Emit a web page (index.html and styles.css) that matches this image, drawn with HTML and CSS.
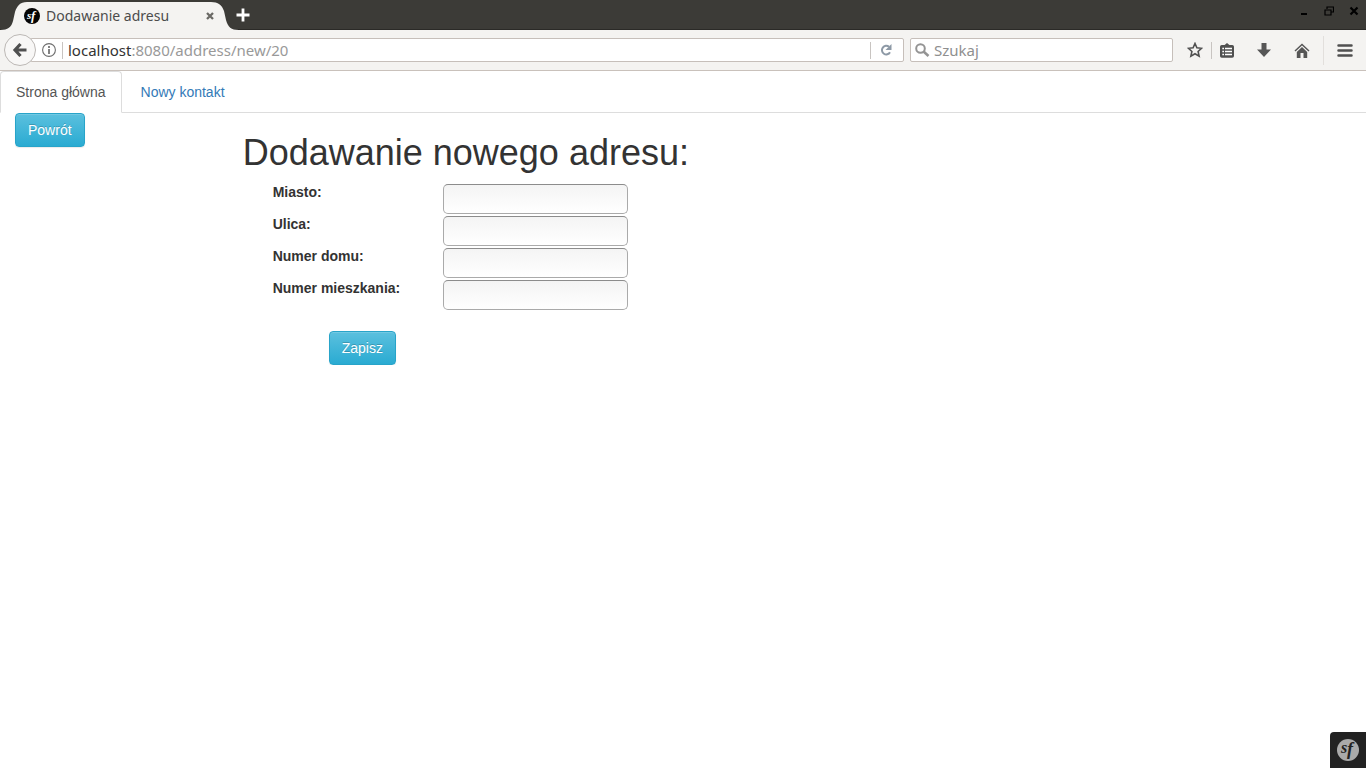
FILE: index.html
```html
<!DOCTYPE html>
<html lang="pl">
<head>
<meta charset="utf-8">
<title>Dodawanie adresu</title>
<link rel="stylesheet" href="styles.css">
</head>
<body>
<div class="browser">
  <div class="titlebar">
    <div class="tab">
      <svg class="tab-shape" width="240" height="28" viewBox="0 0 240 28"><path d="M0 28C8 28 11.500 25 13 19L15 10C17 4 20 0 27 0H211C218 0 222 3 224 9L226 18C228 25 231 28 239 28Z" fill="#f4f3f1"/></svg>
      <svg class="favicon" width="16" height="16" viewBox="0 0 16 16"><circle cx="8" cy="8" r="8" fill="#050505"/><text x="3" y="10.500" class="logo-text" fill="#fff">s</text><text x="7" y="11.500" class="logo-text tall" fill="#fff">f</text></svg>
      <span class="tab-title">Dodawanie adresu</span>
      <button class="plain tab-close" aria-label="Zamknij kartę"><svg width="8" height="8" viewBox="0 0 8 8"><path d="M1 1L7 7M7 1L1 7" stroke="#6a6965" stroke-width="2.300"/></svg></button>
    </div>
    <button class="plain new-tab" aria-label="Nowa karta"><svg width="14" height="14" viewBox="0 0 14 14"><path d="M7 .5V13.500M.5 7H13.500" stroke="#fff" stroke-width="2.800"/></svg></button>
    <div class="window-controls">
      <button class="plain" aria-label="Minimalizuj"><svg width="10" height="10" viewBox="0 0 10 10"><path d="M2 8H8" stroke="#000" stroke-width="2"/></svg></button>
      <button class="plain" aria-label="Przywróć"><svg width="10" height="10" viewBox="0 0 10 10"><path d="M3 3V1H9.500V6H7M1 4H7V9H1Z" fill="none" stroke="#000" stroke-width="1.200"/></svg></button>
      <button class="plain" aria-label="Zamknij"><svg width="10" height="10" viewBox="0 0 10 10"><path d="M1.500 1.500L8.500 8.500M8.500 1.500L1.500 8.500" stroke="#000" stroke-width="2.200"/></svg></button>
    </div>
  </div>
  <div class="toolbar">
    <button class="plain back" aria-label="Wstecz"><svg width="16" height="16" viewBox="0 0 16 16"><path d="M8.500 2L3 8L8.500 14M3.500 8H14.500" fill="none" stroke="#505050" stroke-width="3.200"/></svg></button>
    <div class="address">
      <svg width="14" height="14" viewBox="0 0 14 14"><circle cx="7" cy="7" r="6.400" fill="none" stroke="#6d6d6d" stroke-width="1.100"/><path d="M7 6V11M7 3V5" stroke="#6d6d6d" stroke-width="1.700"/></svg>
      <span class="rule"></span>
      <span class="url"><b>localhost</b>:8080/address/new/20</span>
      <span class="rule"></span>
      <button class="plain reload" aria-label="Odśwież"><svg width="12" height="12" viewBox="0 0 12 12"><path d="M9 2.800A4.300 4.300 0 1 0 10 8.200" fill="none" stroke="#8d99a6" stroke-width="2"/><path d="M11.500 0V6H5.500Z" fill="#8d99a6"/></svg></button>
    </div>
    <div class="search">
      <svg width="15" height="15" viewBox="0 0 15 15"><circle cx="5.500" cy="5.500" r="4.300" fill="none" stroke="#949494" stroke-width="2"/><path d="M8.500 8.500L13.500 13" stroke="#949494" stroke-width="2.600"/></svg>
      <input type="text" placeholder="Szukaj" aria-label="Szukaj">
    </div>
    <div class="tools">
      <button class="plain star" aria-label="Dodaj zakładkę"><svg width="16" height="16" viewBox="0 0 16 16"><path d="M8 1.500L9.900 5.800L14.600 6.300L11.100 9.500L12.100 14.200L8 11.800L3.900 14.200L4.900 9.500L1.400 6.300L6.100 5.800Z" fill="none" stroke="#505050" stroke-width="1.600"/></svg></button>
      <span class="rule"></span>
      <button class="plain" aria-label="Zakładki"><svg width="14" height="15" viewBox="0 0 14 15"><path d="M4 2.500L7 0L10 2.500Z" fill="#505050"/><rect x=".8" y="2.800" width="12.400" height="11.200" rx="1" fill="#505050" stroke="#505050" stroke-width="1.600"/><path d="M2.300 5.500H4M5 5.500H12M2.300 8.500H4M5 8.500H12M2.300 11.500H4M5 11.500H12" stroke="#fff" stroke-width="1.700"/></svg></button>
      <button class="plain" aria-label="Pobrane"><svg width="14" height="14" viewBox="0 0 14 14"><path d="M4.500 0H9.500V6.500H14L7 14L0 6.500H4.500Z" fill="#565656"/></svg></button>
      <button class="plain" aria-label="Strona startowa"><svg width="16" height="15" viewBox="0 0 16 15"><path d="M1 8L8 1.500L15 8" fill="none" stroke="#565656" stroke-width="1.500"/><path d="M8 4L13.200 9V15H9.500V10H6.500V15H2.800V9Z" fill="#565656"/></svg></button>
      <button class="plain menu" aria-label="Menu"><svg width="16" height="13" viewBox="0 0 16 13"><path d="M1.500 1.500H14.500M1.500 6.500H14.500M1.500 11.500H14.500" stroke="#505050" stroke-width="2.500" stroke-linecap="round"/></svg></button>
    </div>
  </div>
</div>
<nav class="nav-tabs">
  <a class="active" href="#">Strona główna</a>
  <a href="#">Nowy kontakt</a>
</nav>
<main class="row">
  <div class="side"><button class="btn" type="button">Powrót</button></div>
  <div class="content">
    <h1>Dodawanie nowego adresu:</h1>
    <form class="form">
      <label for="city">Miasto:</label><input id="city" type="text">
      <label for="street">Ulica:</label><input id="street" type="text">
      <label for="house">Numer domu:</label><input id="house" type="text">
      <label for="flat">Numer mieszkania:</label><input id="flat" type="text">
      <div class="actions"><button class="btn" type="submit">Zapisz</button></div>
    </form>
  </div>
</main>
<button class="plain debug" aria-label="Symfony"><svg width="22" height="22" viewBox="0 0 22 22"><circle cx="11" cy="11" r="11" fill="#aaa"/><text x="4" y="14" class="logo-text large" fill="#222">s</text><text x="10" y="16" class="logo-text large tall" fill="#222">f</text></svg></button>
</body>
</html>
```
FILE: styles.css
```css
* { box-sizing: border-box; }
body {
  margin: 0;
  background: #fff;
  color: #333;
  font: 14px/20px "Liberation Sans", Arial, sans-serif;
}
svg { display: block; flex: none; }
.plain { padding: 0; border: 0; background: none; flex: none; }
.browser { font-family: "Noto Sans", sans-serif; font-size: 14px; }
.titlebar {
  display: flex;
  height: 30px;
  background: #3c3b37;
  border-bottom: 1px solid #2b2a27;
}
.tab {
  position: relative;
  display: flex;
  align-items: center;
  width: 236px;
  height: 30px;
  padding: 2px 22px 0 24px;
}
.tab-shape { position: absolute; left: 0; top: 2px; }
.favicon, .tab-title, .tab-close { position: relative; }
.tab-title { flex: 1; margin-left: 6px; color: #4c4c4c; white-space: nowrap; }
.new-tab { position: relative; }
.window-controls { display: flex; align-items: flex-start; gap: 15px; margin-left: auto; padding: 6px 7px 0 0; }
.logo-text { font: italic bold 11px "Liberation Serif", serif; }
.logo-text.tall { font-size: 13px; }
.logo-text.large { font-size: 16px; }
.logo-text.large.tall { font-size: 18px; }
.toolbar {
  display: flex;
  align-items: center;
  height: 41px;
  padding: 0 13px 0 4px;
  background: #f4f3f1;
  border-bottom: 1px solid #c9c1bb;
}
.back {
  position: relative;
  display: flex;
  align-items: center;
  justify-content: center;
  width: 32px;
  height: 32px;
  border: 1px solid #bcb8b5;
  border-radius: 50%;
  background: #f8f7f6;
}
.address, .search {
  display: flex;
  align-items: center;
  height: 24px;
  border: 1px solid #c6bfba;
  border-radius: 2px;
  background: #fff;
  font-size: 15px;
}
.address { flex: 1; margin-left: -6px; padding: 0 11px; }
.rule { width: 1px; height: 17px; background: #c8c4c1; }
.address .rule:first-of-type { margin: 0 5px 0 6px; }
.url { flex: 1; color: #999; white-space: nowrap; }
.url b { color: #333; font-weight: 400; }
.reload { margin-left: 9px; }
.search { width: 263px; margin-left: 6px; padding: 0 4px; }
.search input {
  width: 100%;
  min-width: 0;
  margin-left: 4px;
  padding: 0;
  border: 0;
  outline: 0;
  background: none;
  font: inherit;
}
.search input::placeholder { color: #8f8f8f; opacity: 1; }
.tools { display: flex; align-items: center; gap: 23px; margin-left: 14px; }
.tools .rule { margin: 0 -15px 0 -16px; }
.star { margin-right: 1px; }
.menu { margin-left: -10px; padding: 8px 0 8px 13px; border-left: 1px solid #e2dfdc; }
.nav-tabs { display: flex; gap: 3px; border-bottom: 1px solid #ddd; }
.nav-tabs a {
  margin-bottom: -1px;
  padding: 10px 15px;
  border: 1px solid transparent;
  border-radius: 4px 4px 0 0;
  color: #337ab7;
  text-decoration: none;
}
.nav-tabs .active { color: #555; background: #fff; border-color: #ddd #ddd #fff; }
.row { display: grid; grid-template-columns: 1fr 5fr; }
.side, .content { padding: 0 15px; }
.btn {
  padding: 6px 12px;
  border: 1px solid #28a4c9;
  border-radius: 4px;
  background: linear-gradient(#5bc0de, #2aabd2);
  box-shadow: inset 0 1px 0 rgba(255, 255, 255, .15), 0 1px 1px rgba(0, 0, 0, .08);
  color: #fff;
  font: inherit;
  text-shadow: 0 -1px 0 rgba(0, 0, 0, .2);
}
h1 { margin: 20px 0 11px; font-size: 36px; line-height: 40px; font-weight: 400; }
.form { display: grid; grid-template-columns: 170px 185px; row-gap: 2px; padding-left: 30px; }
.form label { margin-top: -2px; font-weight: 700; }
.form input {
  width: 100%;
  height: 30px;
  padding: 4px 6px;
  border: 1px solid #aaa;
  border-top-color: #8c8c8c;
  border-radius: 5px;
  background: linear-gradient(#f4f4f4, #fff);
  font: inherit;
}
.actions { grid-column: 1 / -1; padding: 19px 0 0 56px; }
.debug {
  position: fixed;
  right: 0;
  bottom: 0;
  display: flex;
  align-items: center;
  justify-content: center;
  width: 36px;
  height: 36px;
  border-radius: 4px 0 0 0;
  background: #222;
}
```
